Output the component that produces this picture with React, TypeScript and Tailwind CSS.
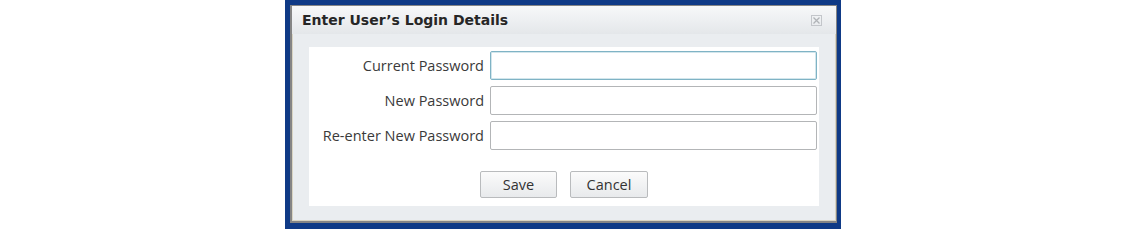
import React from "react";

const FIELDS = ["Current Password", "New Password", "Re-enter New Password"];

function CloseIcon() {
  return (
    <svg width="11" height="11" viewBox="0 0 11 11" aria-hidden>
      <rect x="0.5" y="0.5" width="10" height="10" fill="none" stroke="#c3c6ca" />
      <path d="M2.5 2.5l6 6M8.5 2.5l-6 6" stroke="#b0b3b7" strokeWidth="1.3" />
    </svg>
  );
}

export default function App() {
  return (
    <div className="h-[229px] w-[1124px] bg-white font-['Open_Sans',sans-serif]">
      <div className="ml-[285px] flex h-[229px] w-[556px] bg-[#0f3a86] pb-[6px] pl-[5px] pr-[4px] pt-[5px]">
        <div className="flex flex-1 flex-col border border-[#858585] border-b-2 border-l-2 bg-[#eaedf0] shadow-[inset_0_0_0_1px_#d9d4c2]">
          {/* title bar */}
          <div className="flex h-[28px] items-center justify-between bg-gradient-to-b from-[#f7f8f9] to-[#e4e7ea] pl-[10px] pr-[14px]">
            <span className="font-['DejaVu_Sans',sans-serif] text-[14px] font-bold text-[#262626]">
              Enter User’s Login Details
            </span>
            <CloseIcon />
          </div>

          <div className="flex-1 px-[17px] pb-[15px] pt-[13px]">
            <div className="h-full bg-white pr-[1px] pt-[4px]">
              <div className="grid grid-cols-[175px_327px] gap-x-[6px] gap-y-[6px]">
                {FIELDS.map((f, i) => (
                  <React.Fragment key={f}>
                    <label className="flex h-[29px] items-center justify-end text-[14.5px] text-[#3a3a3a]">
                      {f}
                    </label>
                    <input
                      type="password"
                      className={`h-[29px] rounded-[2px] border bg-white outline-none ${
                        i === 0
                          ? "border-[#7fb3c5] shadow-[inset_0_0_0_1px_#d3e6ec]"
                          : "border-[#b3b5b7]"
                      }`}
                    />
                  </React.Fragment>
                ))}
              </div>
              <div className="mt-[21px] flex gap-[13px] pl-[171px]">
                <button className="h-[27px] w-[77px] rounded-[2px] border border-[#b9bbbd] bg-gradient-to-b from-[#fbfbfb] to-[#e8eaec] text-[14.5px] text-[#333]">
                  Save
                </button>
                <button className="h-[27px] w-[78px] rounded-[2px] border border-[#b9bbbd] bg-gradient-to-b from-[#fbfbfb] to-[#e8eaec] text-[14.5px] text-[#333]">
                  Cancel
                </button>
              </div>
            </div>
          </div>
        </div>
      </div>
    </div>
  );
}
